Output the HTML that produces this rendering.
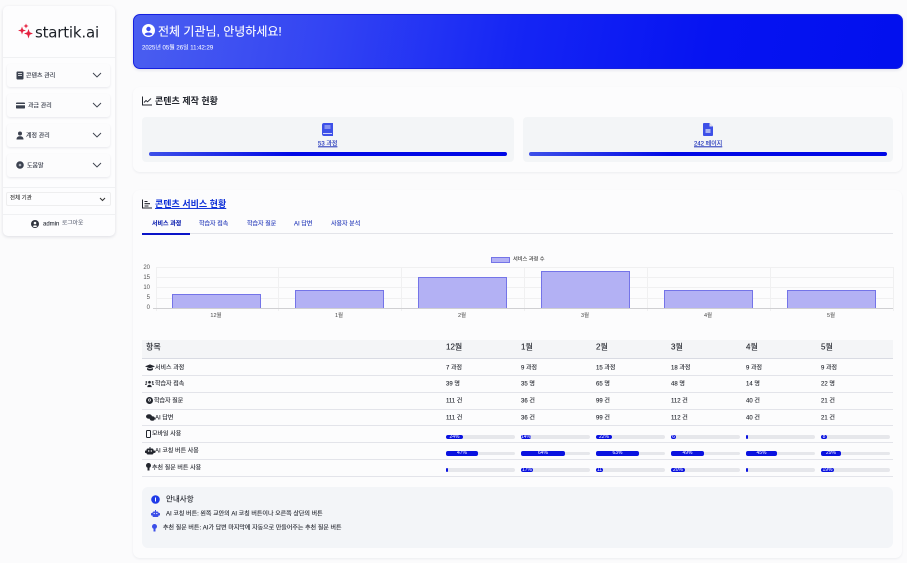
<!DOCTYPE html>
<html lang="ko"><head><meta charset="utf-8"><title>startik.ai</title>
<style>
*{box-sizing:border-box;margin:0;padding:0}
html{width:907px;height:563px;overflow:hidden;background:#fbfbfc}
body{position:relative;width:907px;height:563px;overflow:hidden;background:#fbfbfc;font-family:"Liberation Sans","Noto Sans CJK KR",sans-serif;color:#1f2430;filter:blur(.35px)}
.a{position:absolute}
.t{position:absolute;white-space:nowrap;line-height:1;transform:translateY(-45%);-webkit-text-stroke:.12px currentColor}
.box{position:absolute;background:#fdfdfe;border-radius:6px}
.card{position:absolute;background:#fcfcfd;border-radius:7px;box-shadow:0 1px 2px rgba(40,50,80,.07)}
.menu{position:absolute;left:7px;width:103px;height:23px;background:#fcfcfd;border-radius:3px;box-shadow:0 1px 2px rgba(40,50,80,.1)}
.line{position:absolute;height:1px;background:#e8e9ee}
.s{font-size:6px;color:#2d3240}
.v{font-size:6px;color:#23262e}
.h{font-size:8px;color:#1a1d25}
.pb{position:absolute;width:69px;height:3.5px;background:#e6e7eb;border-radius:2px}
.pf{position:absolute;left:0;top:-.5px;height:4.5px;background:#0a12e0;border-radius:2px;color:#fff;font-size:5px;line-height:4.5px;text-align:center;overflow:hidden}
.grid{position:absolute;background:#f0f0f1}
.bar{position:absolute;width:89px;background:#b3b1f4;border:1px solid #7474e8;border-bottom:0}
.xl{position:absolute;top:313.500px;font-size:5.500px;line-height:1;color:#444;width:40px;text-align:center}
.yl{position:absolute;width:17px;left:133px;text-align:right;font-size:6px;line-height:1;color:#555;transform:translateY(-50%);font-family:"Liberation Sans",sans-serif}
</style></head><body>

<!-- Sidebar -->
<div class="box" style="left:3px;top:6px;width:112px;height:230px;border-radius:5px;box-shadow:0 1px 3px rgba(40,50,80,.14)"></div>
<svg class="a" style="left:17px;top:23px" width="17" height="16" viewBox="0 0 17 16" fill="#e5213f"><path d="M5 3.500 6 6.500 9 7.500 6 8.500 5 11.500 4 8.500 1 7.500 4 6.500Z"/><path d="M9 .5 9.700 2.300 11.500 3 9.700 3.700 9 5.500 8.300 3.700 6.500 3 8.300 2.300Z"/><path d="M11.500 6 12.700 9.300 16 10.500 12.700 11.700 11.500 15.500 10.300 11.700 7 10.500 10.300 9.300Z"/></svg>
<div class="t" style="left:35px;top:32px;color:#1c2027;font-family:'DejaVu Sans',sans-serif;letter-spacing:-.2px;font-size:15px;-webkit-text-stroke:0">startik.ai</div>
<div class="line" style="left:3px;width:112px;top:57px;background:#f0f1f3"></div>

<div class="menu" style="top:64px"></div><div class="menu" style="top:94px"></div><div class="menu" style="top:124px"></div><div class="menu" style="top:154px"></div>
<svg class="a" style="left:16px;top:71px" width="8" height="9" viewBox="0 0 8 9"><rect x=".5" y=".5" width="7" height="8" rx="1" fill="#3c4250"/><path d="M2 2.500H6M2 4.500H6" stroke="#fff" stroke-width=".8"/></svg>
<div class="t s" style="left:26px;top:75.500px">콘텐츠 관리</div>
<svg class="a" style="left:16px;top:102px" width="9" height="7" viewBox="0 0 9 7"><rect y=".5" width="9" height="6" rx=".8" fill="#3c4250"/><rect y="2" width="9" height="1.300" fill="#fff"/></svg>
<div class="t s" style="left:28px;top:105.500px">과금 관리</div>
<svg class="a" style="left:16px;top:131px" width="8" height="9" viewBox="0 0 8 9" fill="#3c4250"><circle cx="4" cy="2.500" r="2"/><path d="M.5 8.500C.5 6 2 5.200 4 5.200S7.500 6 7.500 8.500Z"/></svg>
<div class="t s" style="left:26px;top:135.500px">계정 관리</div>
<svg class="a" style="left:16px;top:161px" width="8" height="8" viewBox="0 0 8 8"><circle cx="4" cy="4" r="3.800" fill="#3c4250"/><circle cx="4" cy="4" r="1.300" fill="#aeb2bb"/></svg>
<div class="t s" style="left:27px;top:165.500px">도움말</div>
<svg class="a" style="left:92px;top:72px" width="10" height="6" viewBox="0 0 10 6" fill="none" stroke="#3a3f4b" stroke-width=".9"><path d="M1 1 5 5 9 1"/></svg>
<svg class="a" style="left:92px;top:102px" width="10" height="6" viewBox="0 0 10 6" fill="none" stroke="#3a3f4b" stroke-width=".9"><path d="M1 1 5 5 9 1"/></svg>
<svg class="a" style="left:92px;top:132px" width="10" height="6" viewBox="0 0 10 6" fill="none" stroke="#3a3f4b" stroke-width=".9"><path d="M1 1 5 5 9 1"/></svg>
<svg class="a" style="left:92px;top:162px" width="10" height="6" viewBox="0 0 10 6" fill="none" stroke="#3a3f4b" stroke-width=".9"><path d="M1 1 5 5 9 1"/></svg>
<div class="line" style="left:3px;width:112px;top:187px;background:#f0f1f3"></div>
<div class="a" style="left:6px;top:192px;width:105px;height:14px;background:#fdfdfe;border:1px solid #eeeeef;border-radius:2px"></div>
<div class="t" style="left:10px;top:199px;font-size:5.500px;color:#333">전체 기관</div>
<svg class="a" style="left:99px;top:197px" width="7" height="5" viewBox="0 0 7 5" fill="none" stroke="#333" stroke-width="1"><path d="M1 1 3.500 3.500 6 1"/></svg>
<div class="line" style="left:3px;width:112px;top:214px;background:#f0f1f3"></div>
<svg class="a" style="left:31px;top:220px" width="8" height="8" viewBox="0 0 8 8"><circle cx="4" cy="4" r="4" fill="#30343e"/><circle cx="4" cy="3" r="1.300" fill="#fff"/><path d="M1.700 6.300C2.200 5 5.800 5 6.300 6.300 5 7.300 3 7.300 1.700 6.300Z" fill="#fff"/></svg>
<div class="t s" style="left:43px;top:224px;color:#30343e">admin</div>
<div class="t" style="left:62px;top:224px;font-size:5.800px;color:#6b7080">로그아웃</div>

<!-- Hero -->
<div class="a" style="left:133px;top:14px;width:770px;height:55px;border-radius:7px;background:linear-gradient(100deg,#4a5ef0 0%,#3344f3 25%,#1525f4 50%,#0613f2 75%,#0210ee 100%);border:1px solid #1520e0;box-shadow:0 1px 3px rgba(40,50,120,.14)"></div>
<svg class="a" style="left:142px;top:24px" width="13" height="13" viewBox="0 0 13 13"><circle cx="6.500" cy="6.500" r="6.500" fill="#fff"/><circle cx="6.500" cy="5" r="2.200" fill="#3a4cf2"/><path d="M2.700 10.200C3.500 8 9.500 8 10.300 10.200 8.500 12 4.500 12 2.700 10.200Z" fill="#3a4cf2"/></svg>
<div class="t" style="left:158px;top:30.500px;font-size:12px;color:#fff">전체 기관님, 안녕하세요!</div>
<div class="t" style="left:142px;top:48px;font-size:6px;color:#e8ebff">2025년 05월 26일 11:42:29</div>

<!-- Card 1 -->
<div class="card" style="left:133px;top:87px;width:769px;height:85px"></div>
<svg class="a" style="left:142px;top:96px" width="10" height="10" viewBox="0 0 10 10" fill="none" stroke="#23262e"><path d="M.5 .5V9H10" stroke-width="1"/><path d="M2 6.500 4 4.500 5.500 5.800 9 2.500" stroke-width=".9"/></svg>
<div class="t" style="left:155px;top:101px;font-size:9px;color:#23262e;font-weight:700;-webkit-text-stroke:0">콘텐츠 제작 현황</div>
<div class="a" style="left:142px;top:117px;width:372px;height:45px;background:#f3f5f7;border-radius:4px"></div>
<div class="a" style="left:523px;top:117px;width:370px;height:45px;background:#f3f5f7;border-radius:4px"></div>
<svg class="a" style="left:322px;top:123px" width="11" height="13" viewBox="0 0 11 13"><path d="M2 0H11V13H2C.8 13 0 12.200 0 11V2C0 .8.800 0 2 0Z" fill="#3d50e8"/><path d="M2.500 3H8.500M2.500 5H8.500M1 10.500H10" stroke="#fff" stroke-width=".8"/></svg>
<div class="t" style="left:318px;top:144px;font-size:6px;color:#1b2fb8;text-decoration:underline">53 과정</div>
<svg class="a" style="left:703px;top:123px" width="10" height="13" viewBox="0 0 10 13"><path d="M1 0H6.500L10 3.500V12C10 12.600 9.600 13 9 13H1C.4 13 0 12.600 0 12V1C0 .4.400 0 1 0Z" fill="#3d50e8"/><rect x="2.500" y="6" width="5" height="4" fill="#a9b2f0"/><path d="M6.500 0V3.500H10" fill="#dde" /></svg>
<div class="t" style="left:694px;top:144px;font-size:6px;color:#1b2fb8;text-decoration:underline">242 페이지</div>
<div class="a" style="left:149px;top:152px;width:358px;height:4px;border-radius:2px;background:linear-gradient(90deg,#3d50e8,#0008e6 40%)"></div>
<div class="a" style="left:529px;top:152px;width:358px;height:4px;border-radius:2px;background:linear-gradient(90deg,#3d50e8,#0008e6 40%)"></div>

<!-- Card 2 -->
<div class="card" style="left:133px;top:190px;width:769px;height:368px"></div>
<svg class="a" style="left:142px;top:199px" width="10" height="10" viewBox="0 0 10 10" fill="none" stroke="#23262e"><path d="M.5 .5V9H10" stroke-width="1"/><path d="M2.500 2.500H5.500M2.500 4.700H8M2.500 7H6.500" stroke-width="1.100"/></svg>
<div class="t" style="left:155px;top:204px;font-size:9px;color:#0d2fd8;font-weight:700;text-decoration:underline;-webkit-text-stroke:0">콘텐츠 서비스 현황</div>
<div class="t" style="left:152px;top:223.500px;font-size:6px;color:#0c1fb0;font-weight:700">서비스 과정</div>
<div class="t" style="left:199px;top:223.500px;font-size:6px;color:#2136b8">학습자 접속</div>
<div class="t" style="left:247px;top:223.500px;font-size:6px;color:#2136b8">학습자 질문</div>
<div class="t" style="left:294px;top:223.500px;font-size:6px;color:#2136b8">AI 답변</div>
<div class="t" style="left:331px;top:223.500px;font-size:6px;color:#2136b8">사용자 분석</div>
<div class="a" style="left:142px;top:233px;width:751px;height:1px;background:#e3e4e9"></div>
<div class="a" style="left:142px;top:233px;width:48px;height:1.500px;background:#0a14c8"></div>

<!-- Chart -->
<div class="a" style="left:491px;top:257px;width:19px;height:6px;background:#b3b1f4;border:1px solid #7474e8"></div>
<div class="t" style="left:513px;top:260px;font-size:5.200px;color:#444">서비스 과정 수</div>
<div class="grid" style="left:156px;top:267px;width:737px;height:1px"></div>
<div class="grid" style="left:156px;top:277px;width:737px;height:1px"></div>
<div class="grid" style="left:156px;top:287px;width:737px;height:1px"></div>
<div class="grid" style="left:156px;top:298px;width:737px;height:1px"></div>
<div class="grid" style="left:156px;top:267px;width:1px;height:44px"></div>
<div class="grid" style="left:278px;top:267px;width:1px;height:44px"></div>
<div class="grid" style="left:401px;top:267px;width:1px;height:44px"></div>
<div class="grid" style="left:524px;top:267px;width:1px;height:44px"></div>
<div class="grid" style="left:647px;top:267px;width:1px;height:44px"></div>
<div class="grid" style="left:770px;top:267px;width:1px;height:44px"></div>
<div class="grid" style="left:893px;top:267px;width:1px;height:44px"></div>
<div class="bar" style="left:172px;top:294px;height:14px"></div>
<div class="bar" style="left:295px;top:290px;height:18px"></div>
<div class="bar" style="left:418px;top:277px;height:31px"></div>
<div class="bar" style="left:541px;top:271px;height:37px"></div>
<div class="bar" style="left:664px;top:290px;height:18px"></div>
<div class="bar" style="left:787px;top:290px;height:18px"></div>
<div class="a" style="left:153px;top:308px;width:740px;height:1px;background:#cfcfd2"></div>
<div class="yl" style="top:267.500px">20</div><div class="yl" style="top:277.500px">15</div><div class="yl" style="top:288px">10</div><div class="yl" style="top:298px">5</div><div class="yl" style="top:308px">0</div>
<div class="xl" style="left:196px">12월</div><div class="xl" style="left:319px">1월</div><div class="xl" style="left:442px">2월</div><div class="xl" style="left:565px">3월</div><div class="xl" style="left:688px">4월</div><div class="xl" style="left:811px">5월</div>

<!-- Table -->
<div class="a" style="left:142px;top:340px;width:751px;height:18px;background:#f4f5f7"></div>
<div class="a" style="left:142px;top:358px;width:751px;height:1px;background:#d9dbe3"></div>
<div class="line" style="left:142px;width:751px;top:375px;background:#e3e4ea"></div>
<div class="line" style="left:142px;width:751px;top:392px;background:#e3e4ea"></div>
<div class="line" style="left:142px;width:751px;top:409px;background:#e3e4ea"></div>
<div class="line" style="left:142px;width:751px;top:425px;background:#e3e4ea"></div>
<div class="line" style="left:142px;width:751px;top:442px;background:#e3e4ea"></div>
<div class="line" style="left:142px;width:751px;top:459px;background:#e3e4ea"></div>
<div class="line" style="left:142px;width:751px;top:476px;background:#e3e4ea"></div>

<div class="t h" style="left:146px;top:346.500px">항목</div>
<div class="t h" style="left:446px;top:346.500px">12월</div><div class="t h" style="left:521px;top:346.500px">1월</div><div class="t h" style="left:596px;top:346.500px">2월</div><div class="t h" style="left:671px;top:346.500px">3월</div><div class="t h" style="left:746px;top:346.500px">4월</div><div class="t h" style="left:821px;top:346.500px">5월</div>

<svg class="a" style="left:145px;top:364px" width="10" height="7" viewBox="0 0 11 7" fill="#23262e"><path d="M5.500 0 11 2.200 5.500 4.400 0 2.200Z"/><path d="M2.300 4V6C3.500 7.300 7.500 7.300 8.700 6V4L5.500 5.300Z"/></svg>
<div class="t v" style="left:155px;top:367.500px">서비스 과정</div>
<svg class="a" style="left:145px;top:380px" width="9" height="8" viewBox="0 0 10 8" fill="#23262e"><circle cx="5" cy="2" r="1.500"/><circle cx="1.500" cy="1.800" r="1"/><circle cx="8.500" cy="1.800" r="1"/><path d="M2.500 7.500C2.500 4 7.500 4 7.500 7.500ZM0 5C0 3 2 3 2.500 3.700L1.500 5ZM10 5C10 3 8 3 7.500 3.700L8.500 5Z"/></svg>
<div class="t v" style="left:155px;top:384px">학습자 접속</div>
<svg class="a" style="left:146px;top:397px" width="7" height="7" viewBox="0 0 7 7"><circle cx="3.500" cy="3.500" r="3.500" fill="#23262e"/><circle cx="3.500" cy="3" r="1.100" fill="none" stroke="#fff" stroke-width=".7"/></svg>
<div class="t v" style="left:154px;top:400.500px">학습자 질문</div>
<svg class="a" style="left:146px;top:414px" width="9" height="7" viewBox="0 0 9 7" fill="#23262e"><ellipse cx="3" cy="2.500" rx="3" ry="2.300"/><ellipse cx="6.300" cy="4.500" rx="2.700" ry="2.300"/></svg>
<div class="t v" style="left:155px;top:417.500px">AI 답변</div>
<svg class="a" style="left:146px;top:430px" width="5" height="8" viewBox="0 0 5 8"><rect x=".5" y=".5" width="4" height="7" rx=".7" fill="none" stroke="#23262e"/></svg>
<div class="t v" style="left:152px;top:434px">모바일 사용</div>
<svg class="a" style="left:145px;top:447px" width="10" height="8" viewBox="0 0 10 8" fill="#23262e"><rect x="1.500" y="1.500" width="7" height="6" rx="1.500"/><rect y="3.500" width="10" height="2.500" rx=".6"/><rect x="4.500" y="0" width="1" height="2"/><circle cx="3.700" cy="4" r=".7" fill="#fff"/><circle cx="6.300" cy="4" r=".7" fill="#fff"/></svg>
<div class="t v" style="left:155px;top:451px">AI 코칭 버튼 사용</div>
<svg class="a" style="left:146px;top:463px" width="5" height="8" viewBox="0 0 5 8" fill="#23262e"><circle cx="2.500" cy="2.500" r="2.500"/><rect x="1.500" y="4.500" width="2" height="3"/></svg>
<div class="t v" style="left:152px;top:467.500px">추천 질문 버튼 사용</div>

<div class="t v" style="left:446px;top:367.500px">7 과정</div><div class="t v" style="left:521px;top:367.500px">9 과정</div><div class="t v" style="left:596px;top:367.500px">15 과정</div><div class="t v" style="left:671px;top:367.500px">18 과정</div><div class="t v" style="left:746px;top:367.500px">9 과정</div><div class="t v" style="left:821px;top:367.500px">9 과정</div>
<div class="t v" style="left:446px;top:384px">39 명</div><div class="t v" style="left:521px;top:384px">35 명</div><div class="t v" style="left:596px;top:384px">65 명</div><div class="t v" style="left:671px;top:384px">48 명</div><div class="t v" style="left:746px;top:384px">14 명</div><div class="t v" style="left:821px;top:384px">22 명</div>
<div class="t v" style="left:446px;top:400.500px">111 건</div><div class="t v" style="left:521px;top:400.500px">36 건</div><div class="t v" style="left:596px;top:400.500px">99 건</div><div class="t v" style="left:671px;top:400.500px">112 건</div><div class="t v" style="left:746px;top:400.500px">40 건</div><div class="t v" style="left:821px;top:400.500px">21 건</div>
<div class="t v" style="left:446px;top:417.500px">111 건</div><div class="t v" style="left:521px;top:417.500px">36 건</div><div class="t v" style="left:596px;top:417.500px">99 건</div><div class="t v" style="left:671px;top:417.500px">112 건</div><div class="t v" style="left:746px;top:417.500px">40 건</div><div class="t v" style="left:821px;top:417.500px">21 건</div>

<div class="pb" style="left:446px;top:435px"><div class="pf" style="width:17px">24%</div></div>
<div class="pb" style="left:521px;top:435px"><div class="pf" style="width:10px">14%</div></div>
<div class="pb" style="left:596px;top:435px"><div class="pf" style="width:16px">22%</div></div>
<div class="pb" style="left:671px;top:435px"><div class="pf" style="width:5px">6</div></div>
<div class="pb" style="left:746px;top:435px"><div class="pf" style="width:2px"></div></div>
<div class="pb" style="left:821px;top:435px"><div class="pf" style="width:6px">8</div></div>

<div class="pb" style="left:446px;top:451.500px"><div class="pf" style="width:32px">47%</div></div>
<div class="pb" style="left:521px;top:451.500px"><div class="pf" style="width:44px">64%</div></div>
<div class="pb" style="left:596px;top:451.500px"><div class="pf" style="width:43px">63%</div></div>
<div class="pb" style="left:671px;top:451.500px"><div class="pf" style="width:33px">49%</div></div>
<div class="pb" style="left:746px;top:451.500px"><div class="pf" style="width:31px">45%</div></div>
<div class="pb" style="left:821px;top:451.500px"><div class="pf" style="width:20px">29%</div></div>

<div class="pb" style="left:446px;top:468px"><div class="pf" style="width:2px"></div></div>
<div class="pb" style="left:521px;top:468px"><div class="pf" style="width:12px">17%</div></div>
<div class="pb" style="left:596px;top:468px"><div class="pf" style="width:7px">11</div></div>
<div class="pb" style="left:671px;top:468px"><div class="pf" style="width:14px">20%</div></div>
<div class="pb" style="left:746px;top:468px"><div class="pf" style="width:2px"></div></div>
<div class="pb" style="left:821px;top:468px"><div class="pf" style="width:13px">19%</div></div>

<!-- Notice -->
<div class="a" style="left:142px;top:487px;width:751px;height:61px;background:#f3f5f8;border-radius:6px"></div>
<svg class="a" style="left:151px;top:495px" width="9" height="9" viewBox="0 0 9 9"><circle cx="4.500" cy="4.500" r="4.300" fill="#1f3be8"/><path d="M4.500 2.500V6.500" stroke="#fff" stroke-width="1"/></svg>
<div class="t" style="left:166px;top:499px;font-size:7.500px;color:#1a1d25">안내사항</div>
<svg class="a" style="left:151px;top:510px" width="9" height="7" viewBox="0 0 9 7" fill="#3c4fe8"><rect x="1.500" y="1.500" width="6" height="5.500" rx="1.300"/><rect y="3" width="9" height="2.500" rx=".6"/><rect x="4" y="0" width="1" height="2"/><circle cx="3.200" cy="3.500" r=".6" fill="#fff"/><circle cx="5.800" cy="3.500" r=".6" fill="#fff"/></svg>
<div class="t" style="left:166px;top:513.500px;font-size:6px;color:#23262e">AI 코칭 버튼: 왼쪽 교안의 AI 코칭 버튼이나 오른쪽 상단의 버튼</div>
<svg class="a" style="left:152px;top:524px" width="5" height="8" viewBox="0 0 5 8" fill="#3c4fe8"><circle cx="2.500" cy="2.500" r="2.500"/><rect x="1.500" y="4.500" width="2" height="3"/></svg>
<div class="t" style="left:163px;top:527.500px;font-size:6px;color:#23262e">추천 질문 버튼: AI가 답변 마지막에 자동으로 만들어주는 추천 질문 버튼</div>

</body></html>
